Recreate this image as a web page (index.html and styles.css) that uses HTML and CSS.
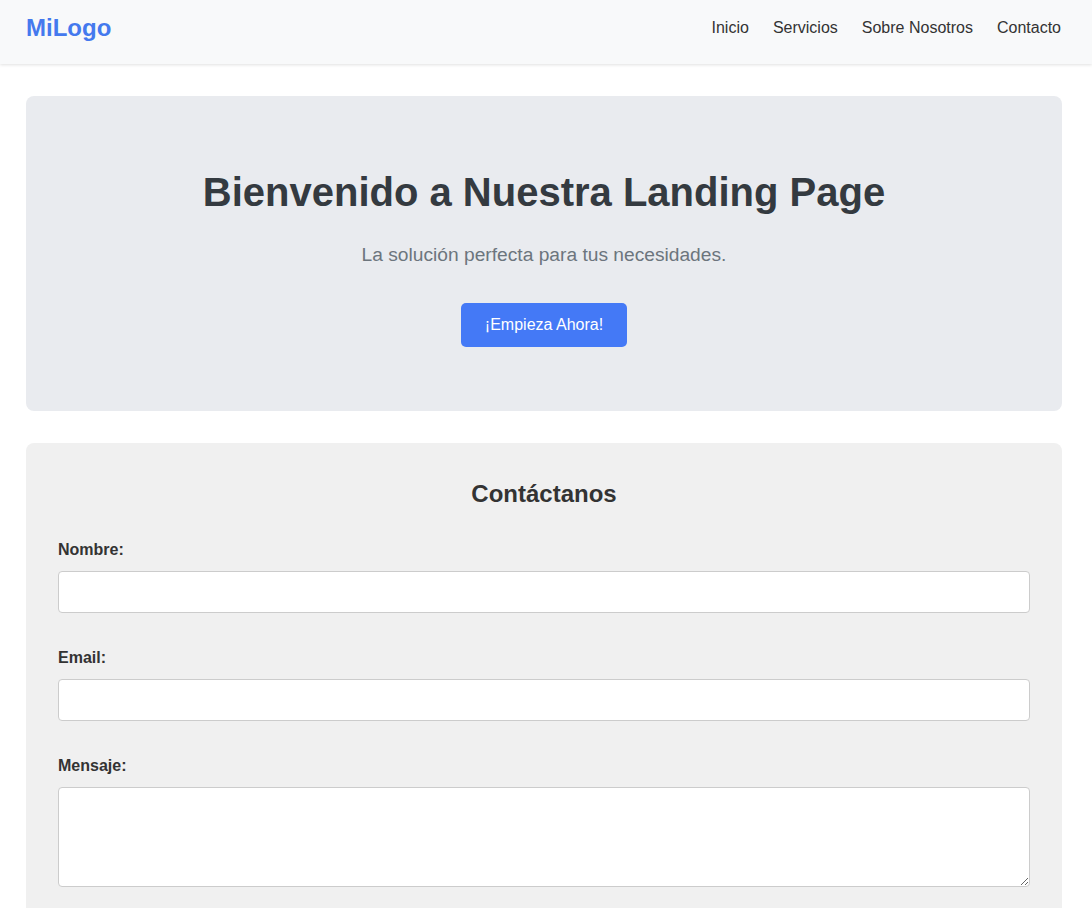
FILE: index.html
```html
<!DOCTYPE html>
<html lang="es">
<head>
<meta charset="utf-8">
<title>Landing Page</title>
<link rel="stylesheet" href="styles.css">
</head>
<body>
<header class="site-header">
  <div class="logo">MiLogo</div>
  <nav class="nav">
    <a href="#">Inicio</a>
    <a href="#">Servicios</a>
    <a href="#">Sobre Nosotros</a>
    <a href="#">Contacto</a>
  </nav>
</header>
<main class="main">
  <section class="hero">
    <h1>Bienvenido a Nuestra Landing Page</h1>
    <p class="subtitle">La solución perfecta para tus necesidades.</p>
    <a class="btn" href="#">¡Empieza Ahora!</a>
  </section>
  <section class="contact">
    <h2>Contáctanos</h2>
    <form class="form">
      <div class="field">
        <label for="nombre">Nombre:</label>
        <input id="nombre" type="text">
      </div>
      <div class="field">
        <label for="email">Email:</label>
        <input id="email" type="email">
      </div>
      <div class="field">
        <label for="mensaje">Mensaje:</label>
        <textarea id="mensaje"></textarea>
      </div>
    </form>
  </section>
</main>
</body>
</html>
```

FILE: styles.css
```css
* { box-sizing: border-box; }
body {
  margin: 0;
  font-family: "Liberation Sans", Arial, sans-serif;
  color: #333;
  background: #fff;
}
.site-header {
  display: flex;
  justify-content: space-between;
  align-items: center;
  height: 64px;
  padding: 0 31px 8px 26px;
  background: #f8f9fa;
  box-shadow: 0 1px 3px rgba(0,0,0,0.12);
}
.logo {
  font-size: 24px;
  font-weight: bold;
  color: #4479ee;
}
.nav {
  display: flex;
  gap: 24px;
}
.nav a {
  color: #333;
  text-decoration: none;
  font-size: 16px;
}
.main {
  padding: 32px 30px 0 26px;
  display: flex;
  flex-direction: column;
  gap: 32px;
}
.hero {
  background: #e9ebef;
  border-radius: 8px;
  padding: 64px 32px 64px;
  text-align: center;
}
.hero h1 {
  margin: 8px 0 0;
  font-size: 40px;
  line-height: 48px;
  color: #343a40;
}
.subtitle {
  margin: 25px 0 0;
  font-size: 19.2px;
  line-height: 28px;
  color: #6c757d;
}
.btn {
  display: inline-block;
  margin-top: 34px;
  padding: 12px 24px;
  line-height: 20px;
  font-size: 16px;
  color: #fff;
  background: #4479f6;
  border-radius: 5px;
  text-decoration: none;
}
.contact {
  background: #f0f0f0;
  border-radius: 8px;
  padding: 36px 32px 40px;
}
.contact h2 {
  margin: 0 0 30px;
  font-size: 24px;
  line-height: 30px;
  text-align: center;
  color: #333;
}
.form {
  display: flex;
  flex-direction: column;
  gap: 34px;
}
.field {
  display: flex;
  flex-direction: column;
}
.field label {
  font-weight: bold;
  font-size: 16px;
  line-height: 22px;
  margin-bottom: 10px;
  color: #333;
}
.field input,
.field textarea {
  width: 100%;
  height: 42px;
  border: 1px solid #ccc;
  border-radius: 4px;
  background: #fff;
  font-family: inherit;
  font-size: 16px;
  padding: 10px;
}
.field textarea {
  height: 100px;
  resize: vertical;
}
```
